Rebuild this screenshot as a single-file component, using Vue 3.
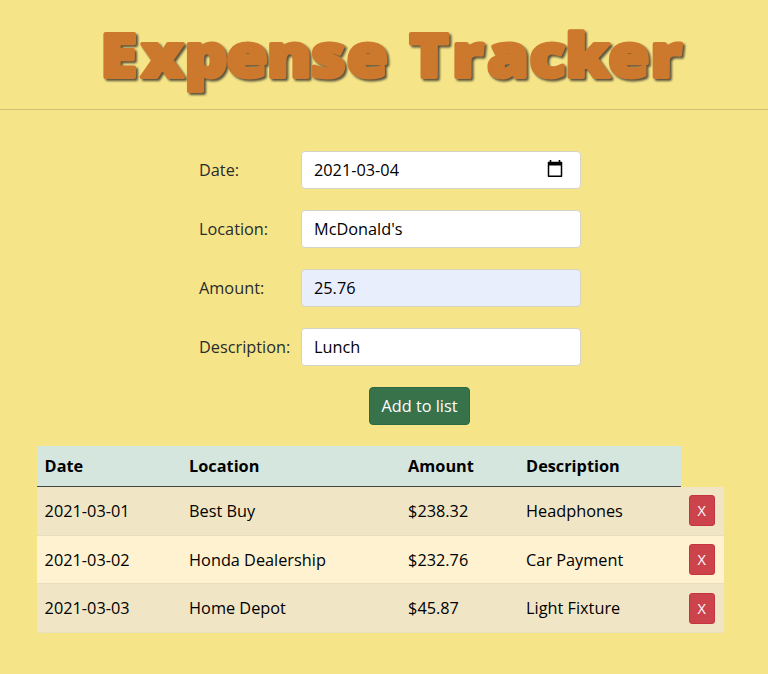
<script setup>
import { ref } from 'vue'

const titleWords = [
  { text: 'Expense', x: '90.5 127.5 166.5 204 240.5 280.5 312.5' },
  { text: 'Tracker', x: '369 407.5 439 477 509.5 548 586' },
]

const form = ref({
  date: '2021-03-04',
  location: "McDonald's",
  amount: '25.76',
  description: 'Lunch',
})

const expenses = ref([
  { date: '2021-03-01', location: 'Best Buy', amount: '$238.32', description: 'Headphones' },
  { date: '2021-03-02', location: 'Honda Dealership', amount: '$232.76', description: 'Car Payment' },
  { date: '2021-03-03', location: 'Home Depot', amount: '$45.87', description: 'Light Fixture' },
])

const addExpense = () => {
  const { date, location, amount, description } = form.value
  expenses.value.push({ date, location, amount: '$' + amount, description })
}
const removeExpense = (index) => expenses.value.splice(index, 1)
</script>

<template>
  <div class="page">
    <header class="header">
      <h1 class="title">
        <svg class="title-art" width="768" height="109" viewBox="0 0 768 109">
          <g transform="scale(1.11 1)">
            <text v-for="word in titleWords" :key="word.text" :x="word.x" y="77">{{ word.text }}</text>
          </g>
        </svg>
      </h1>
    </header>

    <form class="form" @submit.prevent="addExpense">
      <label class="label" for="date">Date:</label>
      <div class="control">
        <input id="date" v-model="form.date" class="plain" type="text" />
        <svg class="calendar" width="16" height="18" viewBox="0 0 16 18">
          <path d="M1.5 2.5h13v13.8h-13z" fill="none" stroke="#000" stroke-width="1.5" stroke-linejoin="round" />
          <path d="M1 2h14v3.4H1zM2.7 0h1.6v3H2.7zM11.7 0h1.6v3h-1.6z" fill="#000" />
        </svg>
      </div>
      <label class="label" for="location">Location:</label>
      <div class="control"><input id="location" v-model="form.location" class="plain" type="text" /></div>
      <label class="label" for="amount">Amount:</label>
      <div class="control filled"><input id="amount" v-model="form.amount" class="plain" type="text" /></div>
      <label class="label" for="description">Description:</label>
      <div class="control"><input id="description" v-model="form.description" class="plain" type="text" /></div>
      <button class="add" type="submit">Add to list</button>
    </form>

    <table class="table">
      <colgroup>
        <col class="c-date" /><col class="c-location" /><col class="c-amount" /><col class="c-description" /><col class="c-remove" />
      </colgroup>
      <thead>
        <tr><th>Date</th><th>Location</th><th>Amount</th><th>Description</th></tr>
      </thead>
      <tbody>
        <tr v-for="(item, i) in expenses" :key="i">
          <td>{{ item.date }}</td>
          <td>{{ item.location }}</td>
          <td>{{ item.amount }}</td>
          <td>{{ item.description }}</td>
          <td><button class="remove" type="button" @click="removeExpense(i)">X</button></td>
        </tr>
      </tbody>
    </table>
  </div>
</template>

<style>
body {
  margin: 0;
  background: #f6e588;
}
</style>

<style scoped>
.page {
  box-sizing: border-box;
  min-height: 674px;
  font-family: "Open Sans", "Noto Sans", sans-serif;
  font-size: 16.3px;
  line-height: 24px;
  color: #292b2c;
}
.header {
  height: 109px;
  border-bottom: 1px solid #cfc074;
}
.title {
  margin: 0;
  line-height: 0;
}
.title-art {
  display: block;
  font-family: "Open Sans", sans-serif;
  font-weight: 800;
  font-size: 60px;
  fill: #cc782d;
  stroke: #cc782d;
  stroke-width: 4px;
  stroke-linejoin: round;
  filter: drop-shadow(2px 2px 1px rgba(50, 45, 40, 0.8));
}
.form {
  display: grid;
  grid-template-columns: 102px 280px;
  row-gap: 21px;
  align-items: center;
  width: 382px;
  margin: 41px 0 0 199px;
}
.label {
  white-space: nowrap;
}
.control {
  box-sizing: border-box;
  display: flex;
  align-items: center;
  height: 38px;
  padding: 0 17px 0 12px;
  border: 1px solid #d5d3c5;
  border-radius: 4px;
  background: #fff;
}
.control.filled {
  background: #e8eefc;
}
.plain {
  flex: 1;
  min-width: 0;
  padding: 0;
  border: 0;
  outline: 0;
  background: transparent;
  color: #000;
  font: inherit;
}
.calendar {
  flex: none;
  margin-bottom: 2px;
}
.add {
  grid-column: 1 / -1;
  justify-self: start;
  width: 101px;
  height: 38px;
  margin-left: 170px;
  padding: 0;
  border: 1px solid #2c6a43;
  border-radius: 4px;
  background: #38724b;
  color: #fff;
  font: inherit;
}
.table {
  width: 687px;
  margin: 21px 0 0 36.6px;
  table-layout: fixed;
  border-collapse: separate;
  border-spacing: 0;
  color: #000;
}
.c-date { width: 144.5px; }
.c-location { width: 219px; }
.c-amount { width: 118px; }
.c-description { width: 162.5px; }
.c-remove { width: 43px; }
.table th {
  box-sizing: border-box;
  height: 41px;
  padding: 0 8px;
  border-bottom: 1px solid #424744;
  background: #d5e6df;
  text-align: left;
  font-weight: 700;
}
.table td {
  box-sizing: border-box;
  height: 48.7px;
  padding: 0 8px;
  border-bottom: 1px solid #e8dfbf;
  background: #fef2d0;
}
.table tbody tr:nth-child(odd) td {
  background: #f0e6c6;
}
.remove {
  display: block;
  width: 26px;
  height: 31px;
  padding: 0;
  border: 1px solid #c5353f;
  border-radius: 3px;
  background: #cc434c;
  color: #fff;
  font-family: inherit;
  font-size: 14.5px;
  font-weight: 500;
  line-height: 21px;
}
</style>
